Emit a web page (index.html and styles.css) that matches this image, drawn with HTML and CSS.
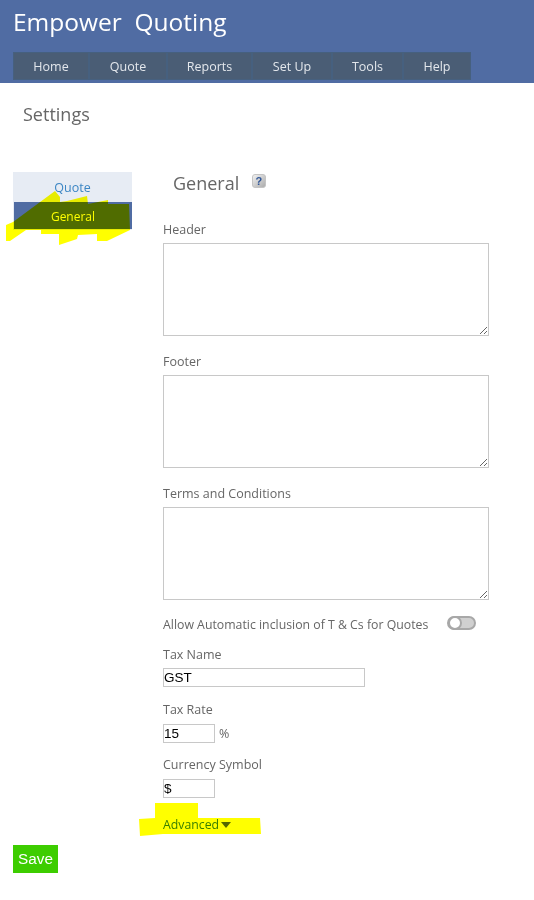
FILE: index.html
```html
<!DOCTYPE html>
<html lang="en">
<head>
  <meta charset="UTF-8">
  <meta name="viewport" content="width=device-width, initial-scale=1.0">
  <title>Settings - Empower Quoting</title>
  <link rel="stylesheet" href="styles.css">
</head>
<body>
  <header class="top">
    <div class="brand">Empower&nbsp; Quoting</div>
    <nav class="menu">
      <a class="w-home">Home</a>
      <a class="w-quote">Quote</a>
      <a class="w-reports">Reports</a>
      <a class="w-setup">Set Up</a>
      <a class="w-tools">Tools</a>
      <a class="w-help">Help</a>
    </nav>
  </header>

  <h1 class="page-title">Settings</h1>

  <div class="layout">
    <ul class="side">
      <li class="side-item">Quote</li>
      <li class="side-item active">General</li>
    </ul>

    <form class="panel">
      <h2 class="panel-title">General
        <svg class="help" width="14" height="14" viewBox="0 0 14 14">
          <defs>
            <linearGradient id="helpBg" x1="0" y1="0" x2="1" y2="1">
              <stop offset="0" stop-color="#f4f4f4"/>
              <stop offset="1" stop-color="#a9a9a9"/>
            </linearGradient>
          </defs>
          <rect x="0.5" y="0.5" width="13" height="13" rx="2.5" fill="url(#helpBg)" stroke="#c4c4c4"/>
          <text x="6.8" y="11" text-anchor="middle" class="help-mark">?</text>
        </svg>
      </h2>

      <label class="lbl" for="header">Header</label>
      <textarea class="area" id="header"></textarea>

      <label class="lbl" for="footer">Footer</label>
      <textarea class="area" id="footer"></textarea>

      <label class="lbl" for="terms">Terms and Conditions</label>
      <textarea class="area" id="terms"></textarea>

      <div class="switch-row">
        <span class="lbl">Allow Automatic inclusion of T &amp; Cs for Quotes</span>
        <span class="switch"><span class="knob"></span></span>
      </div>

      <label class="lbl" for="taxName">Tax Name</label>
      <input class="txt tax-name" id="taxName" type="text" value="GST">

      <label class="lbl" for="taxRate">Tax Rate</label>
      <div class="rate-row">
        <input class="txt short" id="taxRate" type="text" value="15">
        <span class="lbl">%</span>
      </div>

      <label class="lbl" for="currency">Currency Symbol</label>
      <input class="txt short" id="currency" type="text" value="$">

      <div class="advanced">Advanced <span class="caret"></span></div>
    </form>
  </div>

  <button class="save" type="button">Save</button>

  <!-- yellow marker over the screenshot -->
  <svg class="marker" width="534" height="900" viewBox="0 0 534 900">
    <path fill="#ffff00" d="M6 241 L6 225 L13 222 L55 191 L60 197 L60 202 L67 201 L87 196 L88 204 L108 200 L108 204 L129 204 L130 230 L107 241 L97 241 L97 234 L78 235 L77 239 L59 245 L59 234 L41 234 L41 230 L26 230 L10 241 Z"/>
    <path fill="#ffff00" d="M155 803 L198 803 L198 818 L260 818 L261 834 L163 834 L140 836 L139 819 L155 818 Z"/>
  </svg>
</body>
</html>
```
FILE: styles.css
```css
* {
  box-sizing: border-box;
}

body {
  margin: 0;
  height: 900px;
  position: relative;
  overflow: hidden;
  background: #fff;
  font-family: "Open Sans", Arial, sans-serif;
  color: #666;
}

.top {
  height: 83px;
  background: #506ca3;
  padding: 5px 0 0 13px;
}

.brand {
  font-size: 24.5px;
  line-height: 34px;
  color: #fff;
}

.menu {
  display: flex;
  gap: 2px;
  width: 458px;
  height: 28px;
  margin-top: 13px;
  background: #46607f;
  border: 1px solid #46607f;
}

.menu a {
  display: flex;
  align-items: center;
  justify-content: center;
  background: #4a5d75;
  color: #e3e7ec;
  font-size: 12.5px;
}

.w-home { width: 74px; }
.w-quote { width: 76px; }
.w-reports { width: 83px; }
.w-setup { width: 78px; }
.w-tools { width: 69px; }
.w-help { width: 66px; }

.page-title {
  margin: 19px 0 0 23px;
  font-size: 18px;
  line-height: 24px;
  font-weight: 400;
  color: #666;
}

.layout {
  display: flex;
  margin-top: 46px;
  padding-left: 13px;
}

.side {
  width: 119px;
  height: 58px;
  margin: 0;
  padding: 0;
  list-style: none;
  background: #e7ecf4;
}

.side-item {
  height: 30px;
  line-height: 32px;
  text-align: center;
  font-size: 12.5px;
  color: #3c86c4;
}

.side-item.active {
  height: 27px;
  line-height: 29px;
  margin-left: 1px;
  background: #506ca3;
  color: #fff;
  font-size: 12px;
}

.panel {
  width: 326px;
  margin-left: 31px;
}

.panel-title {
  display: flex;
  align-items: flex-start;
  margin: 0 0 25px 10px;
  height: 24px;
  font-size: 18px;
  line-height: 22px;
  font-weight: 400;
  color: #666;
}

.help {
  margin: 2px 0 0 13px;
}

.help-mark {
  font: bold 11px "Liberation Sans", sans-serif;
  fill: #2f5597;
}

.lbl {
  display: block;
  font-size: 12.5px;
  line-height: 17px;
  color: #666;
}

.area {
  display: block;
  width: 326px;
  height: 93px;
  margin: 5px 0 17px;
  border: 1px solid #c8c8c8;
  background: #fff;
  padding: 2px;
}

.switch-row {
  display: flex;
  align-items: flex-start;
  justify-content: space-between;
  width: 313px;
  margin-top: -1px;
  margin-bottom: 13px;
}

.switch-row .lbl {
  font-size: 12.3px;
}

.switch {
  display: block;
  width: 29px;
  height: 14px;
  background: #d0d0d0;
  border: 2px solid #a8a8a8;
  border-radius: 7px;
  position: relative;
}

.knob {
  position: absolute;
  left: -1px;
  top: -2px;
  width: 14px;
  height: 14px;
  background: #fff;
  border: 2px solid #a8a8a8;
  border-radius: 50%;
}

.txt {
  display: block;
  height: 19px;
  padding: 0;
  border: 1px solid #c8c8c8;
  font-family: "Liberation Sans", Arial, sans-serif;
  font-size: 13.5px;
  color: #000;
  border-radius: 0;
  outline: 0;
}

.tax-name {
  width: 202px;
  margin: 5px 0 14px;
}

.short {
  width: 52px;
  margin: 6px 0 13px;
}

.rate-row {
  display: flex;
  gap: 4px;
}

.rate-row .lbl {
  margin-top: 7px;
}

.advanced {
  margin-top: 18px;
  font-size: 12.3px;
  line-height: 17px;
  color: #3a8040;
}

.caret {
  display: inline-block;
  width: 0;
  height: 0;
  margin-left: -1px;
  vertical-align: 1px;
  border-left: 5px solid transparent;
  border-right: 5px solid transparent;
  border-top: 6px solid #556600;
}

.save {
  display: block;
  width: 45px;
  height: 28px;
  margin: 12px 0 0 13px;
  padding: 0;
  border: 0;
  background: #3dcd00;
  color: #fff;
  font-family: "Liberation Sans", Arial, sans-serif;
  font-size: 15.3px;
}

.marker {
  position: absolute;
  left: 0;
  top: 0;
  pointer-events: none;
  mix-blend-mode: multiply;
}
```
